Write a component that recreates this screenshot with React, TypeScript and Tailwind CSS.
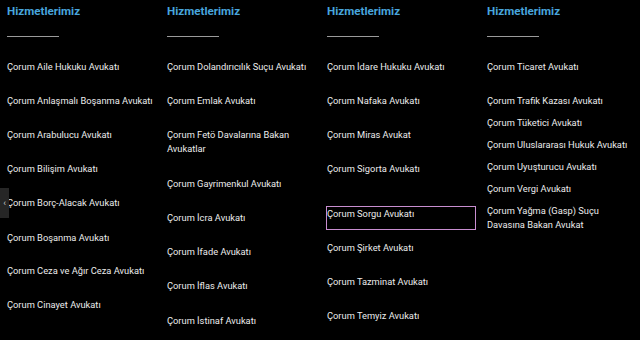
const font = { fontFamily: "Roboto, 'Liberation Sans', sans-serif" };

type Item = { label: string; mt: string; boxed?: boolean };

const columns: Item[][] = [
  [
    { label: "Çorum Aile Hukuku Avukatı", mt: "mt-0" },
    { label: "Çorum Anlaşmalı Boşanma Avukatı", mt: "mt-[20px]" },
    { label: "Çorum Arabulucu Avukatı", mt: "mt-[20px]" },
    { label: "Çorum Bilişim Avukatı", mt: "mt-[20px]" },
    { label: "Çorum Borç-Alacak Avukatı", mt: "mt-[20px]" },
    { label: "Çorum Boşanma Avukatı", mt: "mt-[21px]" },
    { label: "Çorum Ceza ve Ağır Ceza Avukatı", mt: "mt-[19px]" },
    { label: "Çorum Cinayet Avukatı", mt: "mt-[20px]" },
  ],
  [
    { label: "Çorum Dolandırıcılık Suçu Avukatı", mt: "mt-0" },
    { label: "Çorum Emlak Avukatı", mt: "mt-[20px]" },
    { label: "Çorum Fetö Davalarına Bakan Avukatlar", mt: "mt-[20px]" },
    { label: "Çorum Gayrimenkul Avukatı", mt: "mt-[21px]" },
    { label: "Çorum İcra Avukatı", mt: "mt-[20px]" },
    { label: "Çorum İfade Avukatı", mt: "mt-[20px]" },
    { label: "Çorum İflas Avukatı", mt: "mt-[20px]" },
    { label: "Çorum İstinaf Avukatı", mt: "mt-[21px]" },
  ],
  [
    { label: "Çorum İdare Hukuku Avukatı", mt: "mt-0" },
    { label: "Çorum Nafaka Avukatı", mt: "mt-[20px]" },
    { label: "Çorum Miras Avukat", mt: "mt-[20px]" },
    { label: "Çorum Sigorta Avukatı", mt: "mt-[20px]" },
    { label: "Çorum Sorgu Avukatı", mt: "mt-[30px]", boxed: true },
    { label: "Çorum Şirket Avukatı", mt: "mt-[11px]" },
    { label: "Çorum Tazminat Avukatı", mt: "mt-[20px]" },
    { label: "Çorum Temyiz Avukatı", mt: "mt-[20px]" },
  ],
  [
    { label: "Çorum Ticaret Avukatı", mt: "mt-0" },
    { label: "Çorum Trafik Kazası Avukatı", mt: "mt-[20px]" },
    { label: "Çorum Tüketici Avukatı", mt: "mt-[8px]" },
    { label: "Çorum Uluslararası Hukuk Avukatı", mt: "mt-[8px]" },
    { label: "Çorum Uyuşturucu Avukatı", mt: "mt-[8px]" },
    { label: "Çorum Vergi Avukatı", mt: "mt-[8px]" },
    { label: "Çorum Yağma (Gasp) Suçu Davasına Bakan Avukat", mt: "mt-[8px]" },
  ],
];

function ServiceColumn({ items }: { items: Item[] }) {
  return (
    <div className="flex flex-col px-[7px]">
      <h3 className="text-[11.6px] font-bold leading-[22px] text-[#48a5dc]">Hizmetlerimiz</h3>
      <div className="mt-[14px] h-[1px] w-[52px] bg-[#9a9a9a]" />
      <ul className="mt-[23px] flex flex-col">
        {items.map((it) => (
          <li
            key={it.label}
            className={
              it.boxed
                ? `${it.mt} -ml-[1px] w-[150px] border border-[#c88ed0] pb-[8px] text-[9.3px] leading-[14px] text-[#ececec]`
                : `${it.mt} w-[146px] text-[9.3px] leading-[14px] text-[#ececec]`
            }
          >
            {it.label}
          </li>
        ))}
      </ul>
    </div>
  );
}

export default function App() {
  return (
    <div className="relative h-[340px] w-[640px] overflow-hidden bg-black" style={font}>
      <div className="grid grid-cols-4">
        {columns.map((items, i) => (
          <ServiceColumn key={i} items={items} />
        ))}
      </div>
      <div className="absolute left-0 top-[188px] flex h-[30px] w-[9px] items-center justify-center bg-[#262626] text-[9px] leading-none text-[#cccccc]">
        ‹
      </div>
    </div>
  );
}
